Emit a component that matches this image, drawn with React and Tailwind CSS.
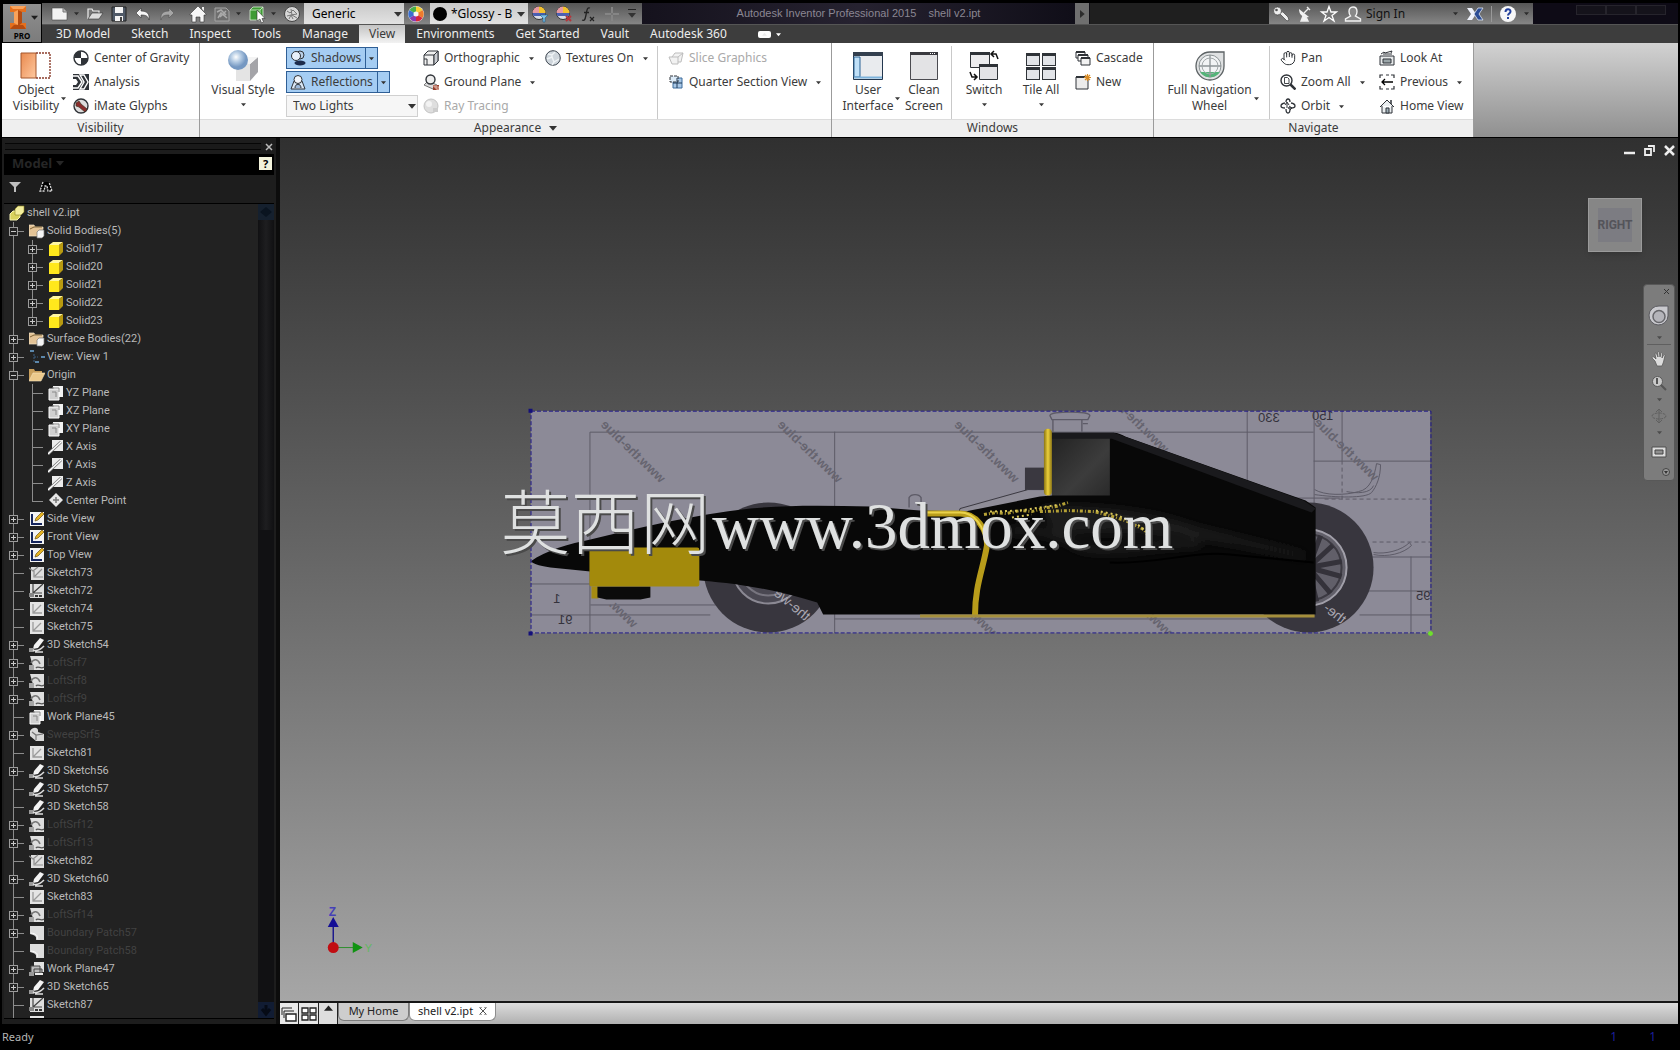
import React, { useState } from 'react';
import { Hand } from 'lucide-react';

const UI_FONT = "font-['Noto_Sans','Open_Sans',sans-serif]";

// Shared bits

const Svg = ({ w = 16, h, box, className = '', children }) => (
    <svg
        width={w}
        height={h || w}
        viewBox={box || `0 0 ${w} ${h || w}`}
        className={`shrink-0 ${className}`}
        fill="none"
        aria-hidden="true"
    >
        {children}
    </svg>
);

const Caret = ({ className = 'text-[#333]', size = 5 }) => (
    <svg width={size} height={size} viewBox="0 0 6 6" className={`shrink-0 ${className}`} fill="currentColor" aria-hidden="true">
        <path d="M0 1.5h6L3 5z" />
    </svg>
);

// Quick access icons, 20x20

const QuickIcon = ({ name }) => {
    switch (name) {
        case 'new':
            return <Svg w={20}><path d="M2 4h11l4 4v8H2z" fill="#f2f2f2" stroke="#444" strokeWidth=".6" /><path d="M13 4v4h4" fill="#bbb" stroke="#777" /></Svg>;
        case 'open':
            return <Svg w={20}><path d="M3 15V5h4l1 2h6v2" fill="#777" stroke="#eee" strokeWidth="1.2" /><path d="M3 15l4-6h11l-4 6z" fill="#ddd" stroke="#333" strokeWidth=".6" /></Svg>;
        case 'save':
            return <Svg w={20}><path d="M3 3h14v14H3z" fill="#505a68" stroke="#222" /><path d="M6 3h8v6H6zM6 12h8v5H6z" fill="#f4f4f4" /><path d="M11 13h2v4h-2z" fill="#444" /></Svg>;
        case 'undo':
            return <Svg w={20}><path d="M8 4v3c6 0 9 3 8 9-1-4-3-5-8-5v3L3 9z" fill="#f5f5f5" stroke="#333" strokeWidth=".6" /></Svg>;
        case 'redo':
            return <Svg w={20}><path d="M12 4v3c-6 0-9 3-8 9 1-4 3-5 8-5v3l5-5z" fill="#a5a5a5" stroke="#555" strokeWidth=".6" /></Svg>;
        case 'home':
            return <Svg w={20}><path d="M2 10l8-8 8 8v1h-2v7h-4v-5H8v5H4v-7H2z" fill="#f5f5f5" stroke="#333" strokeWidth=".6" /><path d="M14 3h2v4l-2-2z" fill="#eee" /></Svg>;
        case 'update':
            return <Svg w={20}><path d="M3 4h11l3 3v10H3z" fill="#6e6e6e" stroke="#a5a5a5" /><path d="M5 8l4-2 5 5m-8 3l3-5 6 5m-1-7l-6 6" stroke="#aaa" strokeWidth="1.5" /></Svg>;
        case 'select':
            return <Svg w={20}><path d="M3 6l3-3h10v10l-3 3H3z" fill="#3f9b35" stroke="#d7f0d2" strokeWidth=".8" /><path d="M3 6h10v10M13 6l3-3" stroke="#d7f0d2" strokeWidth=".8" /><path d="M10 6v11l3-2 1.5 4 2-1-1.5-3.500h3z" fill="#fff" stroke="#333" strokeWidth=".6" /></Svg>;
        case 'ball':
            return <Svg w={20}><circle cx="10" cy="10" r="7.500" fill="#d7d7d7" stroke="#444" /><path d="M5 7l3 2 3-3 4 4M5 12l4-1 2 4M9 5l1 6 5 3M7 15l2-4 6-1" stroke="#777" /></Svg>;
        case 'wheel':
            return (
                <Svg w={20}>
                    <circle cx="10" cy="10" r="8" fill="#eee" />
                    <path d="M10 10V2.500A7.500 7.500 0 0 1 16.500 6z" fill="#f7d032" />
                    <path d="M10 10l6.500-4a7.500 7.500 0 0 1 0 8z" fill="#ef7b2c" />
                    <path d="M10 10l6.500 4A7.500 7.500 0 0 1 10 17.500z" fill="#d7263f" />
                    <path d="M10 10v7.500A7.500 7.500 0 0 1 3.500 14z" fill="#8a3bb0" />
                    <path d="M10 10l-6.500 4a7.500 7.500 0 0 1 0-8z" fill="#3b6fd0" />
                    <path d="M10 10L3.500 6A7.500 7.500 0 0 1 10 2.500z" fill="#48b04a" />
                    <circle cx="10" cy="10" r="2.500" fill="#f6f6f6" />
                </Svg>
            );
        case 'adjust':
        case 'clear':
            return (
                <Svg w={20}>
                    <circle cx="9" cy="9" r="6.500" fill="#d9dce6" stroke="#333" />
                    <path d="M9 9V2.500A6.500 6.500 0 0 1 15.500 9z" fill="#f2c12e" />
                    <path d="M9 9H2.500A6.500 6.500 0 0 1 9 2.500z" fill="#e79aa2" />
                    <path d="M2.500 9h13l-1 3h-11z" fill="#4b5fb2" />
                    {name === 'adjust'
                        ? <path d="M10 11h8l-3 3v4h-2v-4z" fill="#7ec0e6" stroke="#1f5d86" strokeWidth=".6" />
                        : <path d="M12 12l5 5m0-5l-5 5" stroke="#b3363c" strokeWidth="2" />}
                </Svg>
            );
        case 'fx':
            return <Svg w={20}><path d="M12 4c-3-1-3 2-4 7s-1.500 6-4 5M6 8.500h5" stroke="#222" strokeWidth="1.300" /><path d="M12 13l4 4m0-4l-4 4" stroke="#222" strokeWidth="1.200" /></Svg>;
        case 'plus':
            return <Svg w={20}><path d="M10 3v14M3 10h14" stroke="#9a9a9a" strokeWidth="2" /><path d="M10 3v14M3 10h14" stroke="#555" strokeWidth=".6" /></Svg>;
        case 'key':
            return <Svg w={20}><circle cx="6.500" cy="7" r="4" fill="#eee" stroke="#333" strokeWidth=".6" /><circle cx="5.500" cy="6" r="1.300" fill="#555" /><path d="M9 10l7 7 2-1-1-3-5-5" fill="#eee" stroke="#333" strokeWidth=".6" /></Svg>;
        case 'dish':
            return <Svg w={20}><path d="M4 5c0 6 4 9 10 8z" fill="#f2f2f2" /><path d="M9 9l5-5M12 3l3 3M8 12l-2 5h7l-2-4z" fill="#f2f2f2" stroke="#eee" strokeWidth="1.400" /></Svg>;
        case 'star':
            return <Svg w={20}><path d="M10 2.500l2 5.500h5.500l-4.500 3.500 2 5.500-5-3.500L5 17l2-5.500L2.500 8H8z" fill="#777" stroke="#fff" strokeWidth="1.300" /></Svg>;
        case 'person':
            return <Svg w={20}><path d="M10 3c3 0 4 2 4 4.500S12.500 12 12.500 12l5 3v2h-15v-2l5-3S6 10 6 7.500 7 3 10 3z" fill="#888" stroke="#f2f2f2" strokeWidth="1.400" /></Svg>;
        case 'exchange':
            return <Svg w={20}><path d="M2 4h5l4 6-4 6H2l4-6z" fill="#eef2fb" /><path d="M18 4h-5l-4 6 4 6h5l-4-6z" fill="#2b4c94" stroke="#dde6f6" strokeWidth=".8" /></Svg>;
        case 'help':
            return <Svg w={20}><circle cx="10" cy="10" r="8" fill="#f7f7f7" /><path d="M7.500 8c0-3.500 5-3.500 5-.5 0 2-2.500 2-2.500 4" stroke="#24419c" strokeWidth="2" /><path d="M9 13h2v2H9z" fill="#24419c" /></Svg>;
        default:
            return null;
    }
};

const QuickButton = ({ name, label }) => (
    <button type="button" aria-label={label} className="flex w-6 shrink-0 items-center justify-center">
        <QuickIcon name={name} />
    </button>
);

const QuickCaret = ({ label, className = '' }) => (
    <button type="button" aria-label={label} className={`flex w-2 shrink-0 items-center justify-center ${className}`}>
        <Caret className="text-[#2c2c2c]" size={5} />
    </button>
);

// Ribbon icons

const RibbonIcon = ({ name }) => {
    const dark = '#2f3338';
    switch (name) {
        case 'gravity':
            return <Svg><circle cx="8" cy="8" r="7" fill="#fff" stroke={dark} strokeWidth="1.400" /><path d="M8 8V1a7 7 0 0 0-7 7zM8 8v7a7 7 0 0 0 7-7z" fill={dark} /></Svg>;
        case 'analysis':
            return <Svg><path d="M0 0h16v16H0z" fill={dark} /><path d="M0 2h5l4 6-4 6H0M7 1h4l4 7-4 7H7l4-7z" stroke="#fff" strokeWidth="1.400" fill="none" /><path d="M0 5h3l2 3-2 3H0z" fill="#fff" /></Svg>;
        case 'imate':
            return <Svg><circle cx="8" cy="8" r="7" fill="#ddd" stroke={dark} strokeWidth="1.400" /><path d="M3 5l3-2 2 3 6 5-2 3-6-5-3-1z" fill="#8a2c2c" stroke="#432" strokeWidth=".7" /></Svg>;
        case 'shadows':
            return <Svg><circle cx="10" cy="5" r="4" fill="#b9cfe8" stroke={dark} /><circle cx="6" cy="6" r="4.500" fill="#e8f0fa" stroke={dark} /><ellipse cx="10" cy="13" rx="5.500" ry="2.500" fill="#1d2c4c" /></Svg>;
        case 'reflections':
            return <Svg><path d="M1 15L4 7h8l3 8z" fill="#dbe8f6" stroke={dark} /><circle cx="8" cy="5.500" r="4" fill="#f2f6fc" stroke={dark} /><path d="M5 14c0-5 6-5 6 0" fill="#9db9da" stroke={dark} /></Svg>;
        case 'ortho':
            return <Svg><path d="M1 5l4-4h10v10l-4 4H1z" fill="#f1f1f1" stroke={dark} /><path d="M1 5h10v10M11 5l4-4M4 15V9H1" stroke={dark} /><path d="M11 5l4-4v10l-4 4z" fill="#c9ccd1" stroke={dark} /></Svg>;
        case 'ground':
            return <Svg><path d="M1 11l4-4 9 4-4 4z" fill="#ddd" stroke="#777" /><circle cx="7.500" cy="5.500" r="4.500" fill="#eee" stroke={dark} strokeWidth="1.400" /><path d="M10 11h6v5h-6z" fill="#963e2c" /><path d="M10 12h2v2h2v2h2v-3h-3v-2" stroke="#f3d2c6" strokeWidth=".8" /></Svg>;
        case 'ray':
            return <Svg><circle cx="8" cy="8" r="7" fill="#dedede" stroke="#c4c4c4" /><circle cx="6" cy="6" r="3" fill="#f3f3f3" /><path d="M10 10h5v4h-5z" fill="#ccc" /></Svg>;
        case 'textures':
            return <Svg><circle cx="8" cy="8" r="7.300" fill="#cfd6dc" stroke="#3d4650" /><path d="M3 4l4 1 3-3M2 9l5-2 2 5 5-3M7 5v3M9 12l-2 3" stroke="#f0f4f6" strokeWidth="1.400" /></Svg>;
        case 'slice':
            return <Svg><path d="M1 7h9v7H4zM4 7l3-4h8l-2 9h-3M10 7l5-4" fill="#f2f2f2" stroke="#bdbdbd" /></Svg>;
        case 'quarter':
            return <Svg><path d="M5 4h9v10H5z" fill="#a9c8e6" stroke="#3c6c9c" /><path d="M2 2h8v6H2z" fill="#dcebf8" stroke={dark} strokeDasharray="3 1" /><path d="M9 4v10M5 9h9" stroke="#1f3a58" /></Svg>;
        case 'cascade':
            return <Svg><path d="M1 2h9v6H1z" fill="#fff" stroke={dark} /><path d="M3 5h10v6H3z" fill="#fff" stroke={dark} /><path d="M6 8h9v7H6z" fill="#f2f2f2" stroke={dark} /><path d="M1 2h9M3 5h10M6 8h9" stroke={dark} strokeWidth="2" /></Svg>;
        case 'newWindow':
            return <Svg><path d="M1 3h12v12H1z" fill="#ececec" stroke={dark} /><path d="M1 3h9" stroke={dark} strokeWidth="2" /><path d="M12.500 0v7M9 3.500h7M10 1l5 5m0-5l-5 5" stroke="#d98a20" strokeWidth="1.200" /></Svg>;
        case 'pan':
            return <Hand size={16} strokeWidth={1.5} color={dark} className="shrink-0" aria-hidden="true" />;
        case 'zoom':
            return <Svg><circle cx="6.500" cy="6.500" r="5.500" fill="#fff" stroke={dark} strokeWidth="1.400" /><path d="M4.500 3.500h3l1.500 1.500v4.500h-4.500z" fill="#fff" stroke={dark} strokeWidth=".9" /><path d="M10.500 10.500l5 5" stroke={dark} strokeWidth="2.500" /></Svg>;
        case 'orbit':
            return <Svg><path d="M6 4c0-2 1-3 2-3s2 1 2 3M6 11c0 3 1 4 2 4s2-1 2-4M5 5C2 5.500 1 6.500 1 8s2 2 4 2M11 5c3 .5 4 1.500 4 3s-2 2-4 2H8" stroke={dark} strokeWidth="1.300" /><path d="M7 5v5M5 7l2-3 2 3M9 8l3 2-2 2" stroke={dark} /></Svg>;
        case 'look':
            return <Svg><path d="M1 6h14v9H1z" fill="#e6e9ea" stroke={dark} /><path d="M4 9h8v4H4z" fill="#9aa5a8" stroke={dark} /><path d="M2 4l3-2 1 1 7-2-1 2M4 4h9" stroke={dark} /></Svg>;
        case 'previous':
            return <Svg><path d="M1 4V1h3M7 1h3M12 1h3v3M1 12v3h3M7 15h3M12 15h3v-3" stroke={dark} strokeWidth="1.200" /><path d="M3 8h11M6 5L3 8l3 3" stroke="#000" strokeWidth="1.300" /></Svg>;
        case 'homeView':
            return <Svg><path d="M1 9l7-7 7 7M3 8v7h10V8" fill="#eaeef0" stroke={dark} /><path d="M7 10h3v5H7z" fill="#9fb0b8" stroke={dark} /><path d="M12 2v4" stroke={dark} strokeWidth="1.500" /></Svg>;
        case 'objectVisibility':
            return (
                <Svg w={32}>
                    <path d="M1 3h15v25H1z" fill="url(#ovFill)" stroke="#a4562d" />
                    <path d="M16 3h14v25H16" stroke="#8a3d2b" strokeWidth="1.400" strokeDasharray="2 1" />
                    <defs><linearGradient id="ovFill" x2="1" y2="1"><stop stopColor="#e98a4f" /><stop offset="1" stopColor="#ffc9a0" /></linearGradient></defs>
                </Svg>
            );
        case 'visualStyle':
            return (
                <Svg w={32}>
                    <path d="M9 14h14v17H9z" fill="#e4e4e4" /><path d="M23 14l8-7v15l-8 9z" fill="#a4a4a8" /><path d="M9 14l8-7h14l-8 7z" fill="#f4f4f4" />
                    <circle cx="11" cy="10" r="10" fill="url(#vsBall)" />
                    <defs><radialGradient id="vsBall" cx=".4" cy=".35"><stop stopColor="#fff" /><stop offset=".5" stopColor="#b4cbe3" /><stop offset="1" stopColor="#7598c2" /></radialGradient></defs>
                </Svg>
            );
        case 'userInterface':
            return <Svg w={32}><path d="M1.500 2.500h29v27h-29z" fill="#e9ebee" stroke="#23374f" /><path d="M1 2h30v4H1z" fill="#34404f" /><path d="M2 7h6v20H2z" fill="#bfe0f8" stroke="#2d6595" /><path d="M2 27.500h28" stroke="#7db3dc" strokeWidth="2" /></Svg>;
        case 'cleanScreen':
            return <Svg w={32}><path d="M2.500 2.500h27v27h-27z" fill="#e3e3e5" stroke="#4b4b50" /><path d="M2 2h28v3H2z" fill="#3a3a3f" /><path d="M22 3.500h6" stroke="#fff" strokeDasharray="1 1" /></Svg>;
        case 'switch':
            return <Svg w={32}><path d="M2.500 2.500h19v15h-19z" fill="#ececee" stroke={dark} /><path d="M2 2h20v3H2z" fill={dark} /><path d="M11.500 14.500h18v15h-18z" fill="#e3e3e6" stroke={dark} /><path d="M11 14h19v3H11z" fill={dark} /><path d="M24 4h4l2 5M26 1l-3 3 3 3M8 27H4l-2-5M6 24l3 3-3 3" stroke="#111" strokeWidth="1.500" /></Svg>;
        case 'tile':
            return (
                <Svg w={32}>
                    {[[1, 3], [17, 3], [1, 17], [17, 17]].map(([x, y]) => (
                        <g key={`${x}-${y}`}>
                            <rect x={x + 0.5} y={y + 0.5} width="13" height="12" fill="#e2e4e8" stroke={dark} />
                            <rect x={x} y={y} width="14" height="3" fill={dark} />
                        </g>
                    ))}
                </Svg>
            );
        case 'navWheel':
            return (
                <Svg w={32}>
                    <path d="M16 2h14v14a14 14 0 1 1-14-14z" fill="#dfe1e2" stroke="#5c6264" strokeWidth="1.300" />
                    <circle cx="16" cy="16" r="11" fill="#f2f4f5" stroke="#8d9496" />
                    <path d="M6 22a12 12 0 0 0 20 0z" fill="#53b478" />
                    <path d="M16 5v22M5 16h22" stroke="#8d9496" strokeWidth="1.300" />
                    <circle cx="16" cy="16" r="8" stroke="#a3a9ab" />
                </Svg>
            );
        default:
            return null;
    }
};

const BigButton = ({ icon, lines, caret, className = '' }) => (
    <button type="button" className={`flex shrink-0 justify-center pt-1 ${className}`}>
        <span className="flex flex-col items-center">
            <RibbonIcon name={icon} />
            <span className="text-center leading-4">
                {lines.map(line => <span key={line} className="block whitespace-nowrap">{line}</span>)}
            </span>
            {caret === 'below' && <Caret className="mt-1" />}
        </span>
        {caret === 'side' && <Caret className="mt-[46px] ml-[2px]" />}
    </button>
);

const SmallButton = ({ icon, label, caret, disabled }) => (
    <button
        type="button"
        disabled={disabled}
        className={`flex h-6 items-center gap-[5px] whitespace-nowrap ${disabled ? 'text-[#a9a9a9]' : ''}`}
    >
        <RibbonIcon name={icon} />
        {label}
        {caret && <Caret className="ml-1" />}
    </button>
);

const ToggleButton = ({ icon, label }) => {
    const [on, setOn] = useState(true);

    return (
        <div className={`flex h-[22px] w-fit border ${on ? 'border-[#2f5f96] bg-[#a5cdf3]' : 'border-transparent'}`}>
            <button type="button" aria-pressed={on} onClick={() => setOn(!on)} className="flex items-center gap-[5px] px-[3px] pr-1">
                <RibbonIcon name={icon} />
                {label}
            </button>
            <button type="button" aria-label={`${label} options`} className="flex w-3 items-center justify-center border-l border-[#2f5f96]">
                <Caret />
            </button>
        </div>
    );
};

const Column = ({ className = '', children }) => (
    <div className={`flex shrink-0 flex-col items-start ${className}`}>{children}</div>
);

const Divider = () => <div className="w-px shrink-0 self-stretch bg-[#c9c9c9]" />;

const RibbonPanel = ({ title, caret, className, children }) => (
    <section aria-label={title} className={`flex shrink-0 flex-col border-r border-[#9b9b9b] bg-white ${className}`}>
        <div className="flex h-[76px] pt-[3px]">{children}</div>
        <h2 className="flex h-[18px] items-center justify-center gap-2 border-t border-[#dcdcdc] bg-[#efefef] pb-[2px]">
            {title}
            {caret && <Caret size={8} />}
        </h2>
    </section>
);

// Header

const TABS = ['3D Model', 'Sketch', 'Inspect', 'Tools', 'Manage', 'View', 'Environments', 'Get Started', 'Vault', 'Autodesk 360'];

const Header = () => {
    const [active, setActive] = useState('View');

    return (
        <header className="flex h-10 shrink-0 bg-[#3d3d3d]">
            <button type="button" aria-label="Application menu" className="flex w-10 shrink-0 flex-col items-center border border-black bg-linear-to-b from-[#8f8f8f] to-[#7c7c7c]">
                <span className="flex items-center gap-1">
                    <Svg w={20} h={26}>
                        <path d="M3 2h16v6h-4v11h4v6H3v-6h4V8H3z" fill="#e4701e" />
                        <path d="M3 2h16l-3 3H6zM7 8l4-2v15l-4-2z" fill="#f9a25a" />
                        <path d="M15 8v11l-4 3V6zM3 25l4-4h9l3 4z" fill="#b44b10" />
                    </Svg>
                    <Caret size={7} className="text-[#1d1d1d]" />
                </span>
                <span className="mt-[2px] text-[8px] leading-2 font-bold text-black">PRO</span>
            </button>

            <div className="flex min-w-0 flex-1 flex-col">
                <div className="flex h-[21px] bg-[#111016]">
                    <div className="flex w-[600px] shrink-0 items-stretch bg-linear-to-b from-[#565656] to-[#868686] pl-[6px]">
                        <QuickButton name="new" label="New" />
                        <QuickCaret label="New options" className="mr-[3px]" />
                        <QuickButton name="open" label="Open" />
                        <QuickButton name="save" label="Save" />
                        <QuickButton name="undo" label="Undo" />
                        <QuickButton name="redo" label="Redo" />
                        <span className="w-[7px]" />
                        <QuickButton name="home" label="Home" />
                        <QuickButton name="update" label="Update" />
                        <QuickCaret label="Update options" className="mr-[3px]" />
                        <QuickButton name="select" label="Select" />
                        <QuickCaret label="Select options" className="mr-[3px]" />
                        <QuickButton name="ball" label="Material browser" />
                        <div className="flex w-[100px] shrink-0 items-center bg-linear-to-b from-[#c9c9c9] to-[#e2e2e2] pr-[2px]">
                            <select aria-label="Material" className="h-full min-w-0 flex-1 appearance-none pl-2 text-black">
                                <option>Generic</option>
                            </select>
                            <Caret size={8} />
                        </div>
                        <QuickButton name="wheel" label="Appearance browser" />
                        <div className="ml-[2px] flex w-[98px] shrink-0 items-center bg-linear-to-b from-[#c9c9c9] to-[#e2e2e2] px-[3px]">
                            <span className="size-[14px] shrink-0 rounded-full bg-black" />
                            <select aria-label="Appearance" className="h-full min-w-0 flex-1 appearance-none pl-1 text-black">
                                <option>*Glossy - B</option>
                            </select>
                            <Caret size={8} />
                        </div>
                        <QuickButton name="adjust" label="Adjust" />
                        <QuickButton name="clear" label="Clear" />
                        <QuickButton name="fx" label="Parameters" />
                        <QuickButton name="plus" label="Add" />
                        <button type="button" aria-label="Customize" className="flex w-4 flex-col items-center justify-center gap-px">
                            <span className="h-px w-2 bg-[#222]" />
                            <Caret size={8} />
                        </button>
                    </div>
                    <h1 className="flex min-w-0 flex-1 items-center justify-center gap-3 bg-linear-to-r from-[#15121d] via-[#262230] to-[#100e18] font-['Liberation_Sans',Arial,sans-serif] text-[11px] whitespace-nowrap text-[#8b8793]">
                        <span>Autodesk Inventor Professional 2015</span>
                        <span>shell v2.ipt</span>
                    </h1>
                    <button type="button" aria-label="Show search" className="flex w-[14px] shrink-0 items-center justify-center bg-[#6f6f6f]">
                        <Caret className="-rotate-90 text-[#2c2c2c]" size={8} />
                    </button>
                    <input type="search" aria-label="Search" className="ml-px w-[179px] shrink-0 bg-[#1f1f1f] px-1 text-[#ccc] outline-none" />
                    <div className="flex w-[264px] shrink-0 items-center bg-linear-to-b from-[#565656] to-[#868686]">
                        <QuickButton name="key" label="Subscription" />
                        <QuickButton name="dish" label="Communication center" />
                        <QuickButton name="star" label="Favorites" />
                        <button type="button" className="flex items-center gap-px text-[#111]">
                            <span className="flex w-6 justify-center"><QuickIcon name="person" /></span>
                            Sign In
                        </button>
                        <QuickCaret label="Account menu" className="mr-1 ml-auto" />
                        <QuickButton name="exchange" label="Exchange apps" />
                        <span className="mx-1 h-4 w-px bg-[#999]" />
                        <QuickButton name="help" label="Help" />
                        <QuickCaret label="Help menu" className="mr-[3px] ml-[2px]" />
                    </div>
                    <div className="flex w-[145px] shrink-0 justify-end bg-[#0e0b16] pt-[2px] pr-3">
                        {['Minimize', 'Restore', 'Close'].map(name => (
                            <button key={name} type="button" aria-label={name} className="h-[10px] w-[30px] border border-[#26242c] bg-[#15131b]" />
                        ))}
                    </div>
                </div>

                <nav aria-label="Ribbon tabs" className="flex flex-1 items-stretch gap-px border-t border-[#555] pl-1 text-[#ededed]">
                    {TABS.map(tab => (
                        <button
                            key={tab}
                            type="button"
                            onClick={() => setActive(tab)}
                            className={`px-[10px] leading-4 whitespace-nowrap ${tab === active ? 'bg-linear-to-b from-[#c4c4c4] to-[#f2f2f2] text-[#3a3a3a]' : ''}`}
                        >
                            {tab}
                        </button>
                    ))}
                    <button type="button" aria-label="Minimize ribbon" className="ml-5 flex items-center gap-[5px]">
                        <span className="flex h-[7px] w-[13px] items-center justify-center rounded-xs bg-white"><Caret className="rotate-180" size={5} /></span>
                        <Caret className="text-white" />
                    </button>
                </nav>
            </div>
        </header>
    );
};

const Ribbon = () => (
    <div className="flex shrink-0 border-b border-black bg-linear-to-b from-[#d2d2d2] to-[#909090] text-[#3b3b3b]">
        <RibbonPanel title="Visibility" className="w-[198px]">
            <BigButton icon="objectVisibility" lines={['Object', 'Visibility']} caret="side" className="w-[71px] pl-1" />
            <Column>
                <SmallButton icon="gravity" label="Center of Gravity" />
                <SmallButton icon="analysis" label="Analysis" />
                <SmallButton icon="imate" label="iMate Glyphs" />
            </Column>
        </RibbonPanel>

        <RibbonPanel title="Appearance" caret className="w-[632px]">
            <BigButton icon="visualStyle" lines={['Visual Style']} caret="below" className="w-[86px]" />
            <Column className="w-[137px] gap-[2px] pt-px">
                <ToggleButton icon="shadows" label="Shadows" />
                <ToggleButton icon="reflections" label="Reflections" />
                <div className="flex h-[22px] w-[132px] items-center border border-[#d0d0d0] bg-[#f6f6f6] pr-px">
                    <select aria-label="Lighting" className="h-full min-w-0 flex-1 appearance-none pl-[6px]">
                        <option>Two Lights</option>
                    </select>
                    <Caret size={8} />
                </div>
            </Column>
            <Column className="w-[122px]">
                <SmallButton icon="ortho" label="Orthographic" caret />
                <SmallButton icon="ground" label="Ground Plane" caret />
                <SmallButton icon="ray" label="Ray Tracing" disabled />
            </Column>
            <Column className="w-28">
                <SmallButton icon="textures" label="Textures On" caret />
            </Column>
            <Divider />
            <Column className="pl-[10px]">
                <SmallButton icon="slice" label="Slice Graphics" disabled />
                <SmallButton icon="quarter" label="Quarter Section View" caret />
            </Column>
        </RibbonPanel>

        <RibbonPanel title="Windows" className="w-[322px]">
            <BigButton icon="userInterface" lines={['User', 'Interface']} caret="side" className="ml-1 w-[67px] pl-1" />
            <BigButton icon="cleanScreen" lines={['Clean', 'Screen']} className="w-[42px]" />
            <span className="w-[6px]" />
            <Divider />
            <BigButton icon="switch" lines={['Switch']} caret="below" className="ml-[3px] w-[58px]" />
            <BigButton icon="tile" lines={['Tile All']} caret="below" className="w-[56px]" />
            <Column className="pl-[6px]">
                <SmallButton icon="cascade" label="Cascade" />
                <SmallButton icon="newWindow" label="New" />
            </Column>
        </RibbonPanel>

        <RibbonPanel title="Navigate" className="w-[320px]">
            <BigButton icon="navWheel" lines={['Full Navigation', 'Wheel']} caret="side" className="w-[115px] pl-[3px]" />
            <Divider />
            <Column className="w-[109px] pl-[10px]">
                <SmallButton icon="pan" label="Pan" />
                <SmallButton icon="zoom" label="Zoom All" caret />
                <SmallButton icon="orbit" label="Orbit" caret />
            </Column>
            <Column>
                <SmallButton icon="look" label="Look At" />
                <SmallButton icon="previous" label="Previous" caret />
                <SmallButton icon="homeView" label="Home View" />
            </Column>
        </RibbonPanel>
    </div>
);

// Model browser

const TREE = [
    { depth: 0, icon: 'part', label: 'shell v2.ipt' },
    { depth: 1, icon: 'bodies', label: 'Solid Bodies(5)', box: '-' },
    { depth: 2, icon: 'solid', label: 'Solid17', box: '+' },
    { depth: 2, icon: 'solid', label: 'Solid20', box: '+' },
    { depth: 2, icon: 'solid', label: 'Solid21', box: '+' },
    { depth: 2, icon: 'solid', label: 'Solid22', box: '+' },
    { depth: 2, icon: 'solid', label: 'Solid23', box: '+', last: true },
    { depth: 1, icon: 'bodies', label: 'Surface Bodies(22)', box: '+' },
    { depth: 1, icon: 'view', label: 'View: View 1', box: '+' },
    { depth: 1, icon: 'folder', label: 'Origin', box: '-' },
    { depth: 2, icon: 'plane', label: 'YZ Plane' },
    { depth: 2, icon: 'plane', label: 'XZ Plane' },
    { depth: 2, icon: 'plane', label: 'XY Plane' },
    { depth: 2, icon: 'axis', label: 'X Axis' },
    { depth: 2, icon: 'axis', label: 'Y Axis' },
    { depth: 2, icon: 'axis', label: 'Z Axis' },
    { depth: 2, icon: 'point', label: 'Center Point', last: true },
    { depth: 1, icon: 'image', label: 'Side View', box: '+' },
    { depth: 1, icon: 'image', label: 'Front View', box: '+' },
    { depth: 1, icon: 'image', label: 'Top View', box: '+' },
    { depth: 1, icon: 'sketchShared', label: 'Sketch73' },
    { depth: 1, icon: 'sketchLinked', label: 'Sketch72' },
    { depth: 1, icon: 'sketch', label: 'Sketch74' },
    { depth: 1, icon: 'sketch', label: 'Sketch75' },
    { depth: 1, icon: 'sketch3d', label: '3D Sketch54', box: '+' },
    { depth: 1, icon: 'loft', label: 'LoftSrf7', box: '+', dim: true },
    { depth: 1, icon: 'loft', label: 'LoftSrf8', box: '+', dim: true },
    { depth: 1, icon: 'loft', label: 'LoftSrf9', box: '+', dim: true },
    { depth: 1, icon: 'plane', label: 'Work Plane45' },
    { depth: 1, icon: 'sweep', label: 'SweepSrf5', box: '+', dim: true },
    { depth: 1, icon: 'sketch', label: 'Sketch81' },
    { depth: 1, icon: 'sketch3d', label: '3D Sketch56', box: '+' },
    { depth: 1, icon: 'sketch3d', label: '3D Sketch57' },
    { depth: 1, icon: 'sketch3d', label: '3D Sketch58' },
    { depth: 1, icon: 'loft', label: 'LoftSrf12', box: '+', dim: true },
    { depth: 1, icon: 'loft', label: 'LoftSrf13', box: '+', dim: true },
    { depth: 1, icon: 'sketchShared', label: 'Sketch82' },
    { depth: 1, icon: 'sketch3d', label: '3D Sketch60', box: '+' },
    { depth: 1, icon: 'sketch', label: 'Sketch83' },
    { depth: 1, icon: 'loft', label: 'LoftSrf14', box: '+', dim: true },
    { depth: 1, icon: 'patch', label: 'Boundary Patch57', box: '+', dim: true },
    { depth: 1, icon: 'patch', label: 'Boundary Patch58', dim: true },
    { depth: 1, icon: 'planeLinked', label: 'Work Plane47', box: '+' },
    { depth: 1, icon: 'sketch3d', label: '3D Sketch65', box: '+' },
    { depth: 1, icon: 'sketchLinked', label: 'Sketch87' },
    { depth: 1, icon: 'sketch', label: '', box: '+' },
];

const TreeIcon = ({ name }) => {
    switch (name) {
        case 'part':
            return <Svg><path d="M1 9l3-3h7v6l-3 3H1z" fill="#d9d35e" stroke="#f6f3b4" /><path d="M6 4l3-3h6v6l-3 3H6z" fill="#f3ee9d" stroke="#8d8420" strokeWidth=".6" /></Svg>;
        case 'bodies':
            return <Svg><path d="M0 13V2h5l1 2h8v2L9 13z" fill="#e3c396" stroke="#f4e2c4" strokeWidth=".7" /><path d="M1 6l4-2h8" stroke="#7d6235" /><path d="M8 9l2-2h5v6l-2 2H8z" fill="#f4f4f4" stroke="#777" strokeWidth=".7" /></Svg>;
        case 'solid':
            return <Svg><path d="M1 4h10v11H1z" fill="#ffe81c" /><path d="M1 4l4-3h10l-4 3z" fill="#fff7a0" /><path d="M11 4l4-3v10l-4 4z" fill="#b89a10" /></Svg>;
        case 'view':
            return <Svg><path d="M1 2h4M5 5v8h4M5 8h4" stroke="#3a5f82" strokeDasharray="2 1" /><path d="M1 1h4v2H1zM6 12h4v2H6zM12 7h4v2h-4z" fill="#5c87ab" /></Svg>;
        case 'folder':
            return <Svg><path d="M0 14V2h5l1 2h7v3" fill="#c99f5c" /><path d="M0 14l4-8h12l-4 8z" fill="#ecc98c" stroke="#f7e3bd" strokeWidth=".6" /></Svg>;
        case 'plane':
            return <Svg><path d="M5 1h10v11H5z" fill="#f2f2f2" /><path d="M1 4h10v11H1z" fill="#cfcfcf" stroke="#fff" /><path d="M4 7h4v5M5 4V2M5 3h6v4" stroke="#888" /></Svg>;
        case 'planeLinked':
            return <Svg><path d="M5 1h10v10H5z" fill="#e2e2e2" /><path d="M2 5h9v7H2zM5 8h8v4H5z" fill="#bbb" stroke="#444" /><path d="M0 11h5v4H0z" fill="#999" /><path d="M6 13h8" stroke="#eee" strokeWidth="2" /></Svg>;
        case 'axis':
            return <Svg><path d="M4 1h11v11H4z" fill="#ececec" /><path d="M0 15L13 3" stroke="#777" strokeWidth="3" /><path d="M0 15L13 3" stroke="#fff" strokeWidth="1.400" /></Svg>;
        case 'point':
            return <Svg><path d="M8 0l7 7-7 7-7-7z" fill="#e6e6e6" /><path d="M8 4v6M5 7h6" stroke="#777" strokeWidth="1.500" /></Svg>;
        case 'image':
            return <Svg><path d="M1 1h14v14H1z" fill="#f4f4f4" /><path d="M3 3v10h10" stroke="#16265e" strokeWidth="2" /><path d="M6 10l1-3 6-6 2 2-6 6z" fill="#e6b422" stroke="#6d5312" strokeWidth=".7" /></Svg>;
        case 'sketch':
            return <Svg><path d="M1 1h14v14H1z" fill="#e4e4e4" /><path d="M4 3v9h9M4 12l8-8" stroke="#9b9b9b" strokeWidth="1.300" /></Svg>;
        case 'sketchShared':
            return <Svg><path d="M2 2h13v13H2z" fill="#dedede" /><path d="M0 3l4 3 5-4M5 6v6h9M6 11l7-7" stroke="#8d8d8d" strokeWidth="1.200" /></Svg>;
        case 'sketchLinked':
            return <Svg><path d="M1 1h14v14H1z" fill="#dedede" /><path d="M4 1v9h9M4 10l10-9" stroke="#444" strokeWidth="1.200" /><path d="M0 10h5v4H0z" fill="#888" /><path d="M6 13h7" stroke="#333" strokeWidth="2" strokeDasharray="3 1" /></Svg>;
        case 'sketch3d':
            return <Svg><path d="M5 8l6-7 4 2-6 8-5 1z" fill="#f4f4f4" /><path d="M0 11h5v4H0z" fill="#999" /><path d="M4 13c4 2 8-1 11-4M6 15h8" stroke="#ddd" strokeWidth="1.600" /></Svg>;
        case 'loft':
            return <Svg><path d="M1 1h14v14H5z" fill="#dedede" /><path d="M2 8c3-5 7-4 9 1" stroke="#777" strokeWidth="1.600" /><path d="M0 10h5v5H0z" fill="#a5a5a5" /><path d="M7 13c2-3 5 2 8-1" stroke="#555" strokeWidth="1.400" /></Svg>;
        case 'sweep':
            return <Svg><path d="M1 4c3-5 9-4 8 1l6 2v7H7L1 9z" fill="#d9d9d9" /><path d="M3 5l4 3 7-1M7 8v5" stroke="#777" strokeWidth="1.200" /></Svg>;
        case 'patch':
            return <Svg><path d="M1 1h14v14H7c1-3-1-5-6-6z" fill="#dcdcdc" /><path d="M8 14c1-4-1-5-6-6" stroke="#fff" /></Svg>;
        default:
            return null;
    }
};

const TreeGutter = ({ box, last }) => (
    <Svg w={24} h={18}>
        <path d={`M8.500 0V${last ? 9 : 18}M8 9.500h11`} stroke="#8c8c8c" />
        {box && <rect x="4.500" y="5.500" width="8" height="8" fill="#222" stroke="#9c9c9c" />}
        {box && <path d={box === '+' ? 'M6 9.500h5M8.500 7v5' : 'M6 9.500h5'} stroke="#c8c8c8" />}
    </Svg>
);

const TreeRow = ({ node }) => (
    <li className="flex h-[18px] items-center">
        {node.depth === 0 && <span className="w-1 shrink-0" />}
        {node.depth === 2 && <Svg w={19} h={18}><path d="M8.500 0v18" stroke="#8c8c8c" /></Svg>}
        {node.depth > 0 && <TreeGutter box={node.box} last={node.last} />}
        <TreeIcon name={node.icon} />
        <span className={`ml-[2px] whitespace-nowrap ${node.dim ? 'text-[#414141]' : ''}`}>{node.label}</span>
    </li>
);

const ModelBrowser = () => (
    <aside aria-label="Model browser" className="flex w-[278px] shrink-0 flex-col border-r-4 border-[#0c0c0c] bg-[#1d1d1d] pb-[5px]">
        <div className="flex h-4 shrink-0 items-center gap-1 px-[3px] pt-px">
            <span className="h-[7px] flex-1 border-y border-[#060606] bg-[#1a1a1a]" />
            <button type="button" aria-label="Close browser">
                <Svg w={8}><path d="M1 1l6 6m0-6L1 7" stroke="#bbb" strokeWidth="1.500" /></Svg>
            </button>
        </div>
        <div className="mx-[2px] flex h-[21px] shrink-0 items-center justify-between bg-black pr-[2px] pb-[2px] pl-2">
            <button type="button" className="flex items-center gap-1 text-[13px] font-bold text-[#262626]">
                Model
                <Caret size={8} className="text-[#262626]" />
            </button>
            <button type="button" aria-label="Browser help" className="size-[13px] bg-[#f3f3dc] text-[11px] leading-[13px] font-bold text-black">?</button>
        </div>
        <div className="flex h-7 shrink-0 items-center gap-[18px] pb-[5px] pl-[7px]">
            <button type="button" aria-label="Filter">
                <Svg w={12}><path d="M0 1h12L7 6v5H5V6z" fill="#bdbdbd" /></Svg>
            </button>
            <button type="button" aria-label="Find">
                <Svg w={14}><path d="M4 2L1 11h4l1-5h2l1 5h4l-3-9" stroke="#ddd" strokeWidth="1.300" strokeDasharray="2 1" fill="#000" /></Svg>
            </button>
        </div>
        <div className="mx-[2px] flex min-h-0 flex-1 border-y border-black bg-[#222]">
            <ul className="min-h-0 flex-1 overflow-hidden pl-px font-['Roboto','Noto_Sans',sans-serif] text-[11px] text-[#b9b9b9]">
                {TREE.map((node, i) => <TreeRow key={i} node={node} />)}
            </ul>
            <div className="flex w-4 shrink-0 flex-col justify-between bg-[#111113]">
                <button type="button" aria-label="Scroll up" className="h-4 bg-[#15202e]">
                    <Svg w={16}><path d="M8 3l6 5-6 5-6-5z" fill="#0a1420" /></Svg>
                </button>
                <span className="mx-px h-[310px] bg-linear-to-r from-[#121214] via-[#1e1e20] to-[#121214]" />
                <span className="flex-1" />
                <button type="button" aria-label="Scroll down" className="h-4 bg-[#111c33]">
                    <Svg w={16}><path d="M4 7l4 5 4-5M8 3v8" stroke="#060b16" strokeWidth="3" /></Svg>
                </button>
            </div>
        </div>
    </aside>
);

// Viewport

// mirrored captions printed diagonally over the side view
const CAPTIONS = [[660, 484], [837, 484], [1014, 484], [1164, 454], [1374, 482]];
const LOW_CAPTIONS = [[632, 629], [994, 640], [1170, 640]];

const Scene = () => (
    <svg viewBox="280 138 1398 864" className="absolute inset-0 size-full" fill="none" role="img" aria-label="Side view of the car shell">
        <defs>
            <linearGradient id="block" x1="0" y1="0" x2="1" y2="1"><stop stopColor="#222" /><stop offset=".6" stopColor="#3c3c3c" /><stop offset="1" stopColor="#2a2a2a" /></linearGradient>
            <linearGradient id="bar" x2="1"><stop stopColor="#8a7412" /><stop offset=".5" stopColor="#ecd03c" /><stop offset="1" stopColor="#8a7412" /></linearGradient>
            <filter id="soft"><feGaussianBlur stdDeviation="5" /></filter>
            <clipPath id="sheet"><rect x="530" y="411" width="901" height="223" /></clipPath>
        </defs>

        <g clipPath="url(#sheet)">
            <rect x="530" y="411" width="901" height="223" fill="#8c8a97" />

            {/* blueprint lines */}
            <g stroke="#5d5b67">
                <path d="M589.500 634V432.500H1314M834.500 432v202M530 584.500h60M590 605.500h130M530 615.500h180M834 619.500h480" />
                <path d="M1247.500 411v80M1314.500 411v223M1342.500 411v50M1314 461.500h117M1290 498.500h50M1370 557.500h61M1411.500 557v77M1318 591.500h113M1360 615.500h71" />
                <path d="M1342.500 461v40M1325 499.500h106M1373 542.500h58" strokeDasharray="4 3" />
                <path d="M1050 416c0-5 40-5 40 0l-2 4h-36zM1053 420v12M1082 420v12M1083 424h5" strokeWidth="1.400" />
                <path d="M1315 490c10 6 30 6 44 2 12-2 16-16 18-28l4 1c0 12-4 22-9 28 -6 6-36 5-57 2M1347 492c10 2 24 2 27-6M1374 553c12 2 28-2 36-10l2 3c-8 8-24 12-38 9" />
                <path d="M909 508v-10c2-4 10-4 12 0v10" strokeWidth="1.400" />
            </g>
            <g fill="#66646f" fontFamily="Liberation Sans, sans-serif" fontSize="13" fontWeight="700">
                {CAPTIONS.map(([x, y]) => (
                    <text key={x} transform={`translate(${x} ${y}) scale(-1 1) rotate(-44)`}>www.the-blue</text>
                ))}
                {LOW_CAPTIONS.map(([x, y]) => (
                    <text key={x} transform={`translate(${x} ${y}) scale(-1 1) rotate(-44)`}>www.</text>
                ))}
                <g fill="#34323c" fontWeight="400">
                    <text transform="translate(1280 422) scale(-1 1)">330</text>
                    <text transform="translate(1334 420) scale(-1 1)">150</text>
                    <text transform="translate(1431 601) scale(-1 1)">95</text>
                    <text transform="translate(572 625) scale(-1 1)">91</text>
                    <text transform="translate(560 604) scale(-1 1)">1</text>
                </g>
            </g>

            {/* wheels */}
            <circle cx="768" cy="568" r="65" fill="#38363e" />
            <circle cx="768" cy="568" r="36" fill="#4a4852" stroke="#8b8993" strokeWidth="2" />
            <circle cx="768" cy="568" r="28" stroke="#77757f" strokeWidth="2" />
            <circle cx="1309" cy="568" r="65" fill="#38363e" />
            <circle cx="1309" cy="568" r="38" fill="#615f69" stroke="#a19fa9" strokeWidth="2" />
            <circle cx="1309" cy="568" r="33" stroke="#3c3a42" strokeWidth="2" />
            <path d="M1309 568l12-32M1309 568l24-22M1309 568l33-6M1309 568l33 9M1309 568l22 26M1309 568l8 34" stroke="#34323a" strokeWidth="5" />
            <g fill="#a9a7b1" fontFamily="Liberation Sans, sans-serif" fontSize="14">
                <text transform="translate(805 622) scale(-1 1) rotate(-40)">the-we</text>
                <text transform="translate(1342 625) scale(-1 1) rotate(-38)">the-</text>
            </g>
        </g>

        {/* shell */}
        <path d="M1025 468h22v24h-22z" fill="#3a3840" />
        <path d="M960 509l68-19h20v8l-90 18z" fill="#8f8d98" stroke="#3a3840" />
        <path d="M530 562C545 551 570 544 590 540 640 528 690 516 750 509c40-4 80-3 120-2l50 4 45 1 75-15 12-1V433h62c4 0 8 2 12 4l180 64 10 7v107H823l-6-12c-40-12-70-18-117-22l-110-9-40-4c-12-2-20-4-20-8z" fill="#080808" />
        <path d="M1052 436h58v60h-58z" fill="url(#block)" />
        <path d="M1052 433h62l190 68 12 8-4 4-200-74h-60z" fill="#1a1a1d" />
        <g filter="url(#soft)">
            <path d="M1040 508c60-6 130 8 160 20l106 26v6c-60-14-150-34-250-24z" fill="#1c1c1c" />
            <path d="M1010 532c30-4 50 4 70 16 40 8 80-6 120-4" stroke="#222" strokeWidth="6" />
        </g>
        <path d="M1110 563c50 2 80-12 120-8l84 8" stroke="#000" strokeWidth="2" />

        {/* yellow parts */}
        <path d="M591 587h7v12h-7z" fill="#a58b12" />
        <path d="M597 587h53v11l-10 2h-34l-9-2z" fill="#0b0b0b" />
        <rect x="589" y="548" width="110" height="39" rx="2" fill="#a38a0c" />
        <rect x="1044" y="429" width="8" height="67" rx="4" fill="url(#bar)" />
        <path d="M922 514h38c16 0 28 16 27 32-4 24-12 40-12 70" stroke="#b89c1a" strokeWidth="6" />
        <path d="M922 513h38c14 0 25 14 25 30" stroke="#ead24a" strokeWidth="2" />
        <path d="M920 616.500h395" stroke="#a58f3c" strokeWidth="3" />
        <path d="M984 515l12-2 10 1 14-3 12 1 14-4 10-1 12-4M1040 512l30-1 24 1 16 4 18 6 16 8 6 8" stroke="#b5a136" strokeWidth="3" strokeDasharray="3 2 1 2" />
        <path d="M990 512l30-1 40-6M1096 511l20 4 22 10 14 12M1012 518l20-3" stroke="#d8c65a" strokeDasharray="2 3" strokeWidth="2" />

        {/* sheet outline */}
        <rect x="530.5" y="411.5" width="901" height="222" stroke="#1e178a" strokeDasharray="4 2" />
        <path d="M528 409h4v4h-4zM528 632h4v4h-4z" fill="#14107a" />
        <circle cx="1431" cy="634" r="2.500" fill="#6ee02c" />

        <g fontFamily="'Liberation Serif', 'Noto Sans CJK SC', serif" fill="#4a4a4a" aria-hidden="true">
            <text x="502" y="551" fontSize="70" fontWeight="300">莫西网</text>
            <text x="714" y="550" fontSize="65">www.3dmox.com</text>
        </g>
        <g fontFamily="'Liberation Serif', 'Noto Sans CJK SC', serif" fill="#dfe1e1">
            <text x="500" y="549" fontSize="70" fontWeight="300">莫西网</text>
            <text x="712" y="548" fontSize="65">www.3dmox.com</text>
        </g>

        {/* origin triad */}
        <path d="M332.500 926v18" stroke="#16128c" strokeWidth="1.400" />
        <path d="M332.500 918l5.500 10h-11z" fill="#140f96" />
        <path d="M336 948.500h17" stroke="#2e8f2e" />
        <path d="M352 943l10 5.500-10 5.500z" fill="#109312" />
        <circle cx="332.500" cy="948.500" r="5.500" fill="#c10d12" />
        <text x="328" y="917" fontSize="12" fontWeight="700" fontFamily="Liberation Sans, sans-serif" fill="#4540b8">Z</text>
        <text x="364" y="953" fontSize="11" fontFamily="Liberation Sans, sans-serif" fill="#62b862">Y</text>
    </svg>
);

const NavBar = () => (
    <div className="absolute top-[146px] right-[3px] flex h-[197px] w-8 flex-col items-center rounded-sm border border-[#585858] bg-[#7c7c7c]">
        <button type="button" aria-label="Close navigation bar" className="mt-[3px] mr-1 self-end">
            <Svg w={7}><path d="M1 1l5 5m0-5L1 6" stroke="#333" /></Svg>
        </button>
        <button type="button" aria-label="Steering wheel" className="mt-[10px]">
            <Svg w={22}><path d="M11 1h9v10a9.500 9.500 0 1 1-9-10z" fill="#c9c9ce" stroke="#5b5b60" /><circle cx="11" cy="11.500" r="6" fill="#b4b4ba" stroke="#66666b" strokeWidth="1.500" /></Svg>
        </button>
        <Caret className="mt-2 text-[#4c4c4c]" />
        <span className="mt-1 h-px w-6 bg-[#5f5f5f]" />
        <button type="button" aria-label="Pan view" className="mt-[6px]">
            <Svg><path d="M4 10L1 7c0-1 1-1.500 2-1l2 2-1-5c0-1.300 1.400-1.300 1.700 0L7 6l-.3-4.500c0-1.200 1.600-1.200 1.700 0L9 6l1-4c.3-1 1.600-.8 1.500.3L11 7l1.500-3c.6-1 1.800-.4 1.500.6L12.500 11 11 15H6z" fill="#dcdcdc" stroke="#5a5a5a" strokeWidth=".8" /></Svg>
        </button>
        <button type="button" aria-label="Zoom view" className="mt-2">
            <Svg><circle cx="6.500" cy="6.500" r="5" fill="#c9c9c9" stroke="#5a5a5a" /><path d="M6 3v6M10 10l5 5" stroke="#555" strokeWidth="2" /></Svg>
        </button>
        <Caret className="mt-[6px] text-[#4c4c4c]" />
        <button type="button" aria-label="Orbit view" className="mt-[6px]">
            <Svg><path d="M8 1v14M5 4l3-3 3 3M5 12l3 3 3-3" stroke="#606060" /><ellipse cx="8" cy="8" rx="7" ry="3" stroke="#606060" strokeDasharray="3 1" /></Svg>
        </button>
        <Caret className="mt-[6px] text-[#4c4c4c]" />
        <button type="button" aria-label="Look at face" className="mt-2">
            <Svg><path d="M1 4h14v10H1z" fill="#dcdcdc" stroke="#4e4e4e" /><path d="M4 7h8v4H4z" fill="#8f8f8f" stroke="#444" /></Svg>
        </button>
        <button type="button" aria-label="Customize navigation bar" className="mt-auto mr-1 mb-1 self-end">
            <Svg w={8}><circle cx="4" cy="4" r="3.500" stroke="#444" fill="#999" /><path d="M2 3h4L4 6z" fill="#333" /></Svg>
        </button>
    </div>
);

const Viewport = () => (
    <main className="relative min-h-0 flex-1 bg-linear-to-b from-[#303030] to-[#a6a6a6]">
        <Scene />
        <div className="absolute top-[7px] right-[3px] flex items-center gap-[9px]">
            <button type="button" aria-label="Minimize document"><Svg w={11}><path d="M0 8h11" stroke="#eee" strokeWidth="2.500" /></Svg></button>
            <button type="button" aria-label="Restore document"><Svg w={11}><path d="M4 1h6v6M1 4h6v6H1z" stroke="#eee" strokeWidth="1.800" /></Svg></button>
            <button type="button" aria-label="Close document"><Svg w={11}><path d="M1 1l9 9m0-9l-9 9" stroke="#eee" strokeWidth="2.500" /></Svg></button>
        </div>
        <button type="button" className="absolute top-[60px] right-9 flex size-[54px] items-center justify-center border border-[#9b9b9b] bg-[#868686] shadow-md">
            <span className="flex size-[34px] items-center justify-center bg-[#7c7c82] font-['Roboto',sans-serif] text-xs font-bold text-[#54545a]">RIGHT</span>
        </button>
        <NavBar />
    </main>
);

const DocumentTabs = () => (
    <div className="flex h-[23px] shrink-0 border-t-2 border-[#161616] bg-linear-to-b from-[#dcdcdc] to-[#b0b0b0] text-[11px] text-[#222]">
        <button type="button" aria-label="Cascade windows" className="flex w-[19px] items-center justify-center border-r border-[#222] bg-[#e8e8e8]">
            <Svg><path d="M1 9V2h10M3 12V5h10" stroke="#222" /><path d="M5 8h10v7H5z" fill="#fff" stroke="#222" strokeWidth="1.400" /></Svg>
        </button>
        <button type="button" aria-label="Tile windows" className="flex w-5 items-center justify-center border-r border-[#222] bg-[#e8e8e8]">
            <Svg><path d="M1 2h6v5H1zM9 2h6v5H9zM1 9h6v5H1zM9 9h6v5H9z" fill="#fff" stroke="#222" strokeWidth="1.300" /></Svg>
        </button>
        <button type="button" aria-label="Show tabs" className="flex w-[19px] justify-center border-r border-[#222] bg-[#dedede] pt-px">
            <Caret size={9} className="rotate-180" />
        </button>
        <button type="button" className="mb-[3px] w-[71px] rounded-b-md border border-t-0 border-[#7c7c7c] bg-[#cdcdcd] pb-[2px] leading-4">My Home</button>
        <button type="button" className="mb-[3px] flex w-[87px] items-center justify-center gap-[6px] rounded-b-md border border-t-0 border-[#8c8c8c] bg-white pb-[2px] leading-4">
            shell v2.ipt
            <Svg w={8}><path d="M1 1l6 6m0-6L1 7M0 0h3M5 0h3M0 8h3M5 8h3" stroke="#555" /></Svg>
        </button>
    </div>
);

const App = () => (
    <div className={`flex h-screen flex-col overflow-hidden bg-black px-[2px] pt-[3px] text-xs ${UI_FONT}`}>
        <Header />
        <Ribbon />
        <div className="flex min-h-0 flex-1">
            <ModelBrowser />
            <div className="flex min-w-0 flex-1 flex-col">
                <Viewport />
                <DocumentTabs />
            </div>
        </div>
        <footer className="flex h-[26px] shrink-0 items-center justify-between text-[11px] text-[#b5b5b5]">
            <span>Ready</span>
            <span className="flex gap-8 pr-[22px] text-xs text-[#1c1f9c]">
                <span>1</span>
                <span>1</span>
            </span>
        </footer>
    </div>
);

export default App;
